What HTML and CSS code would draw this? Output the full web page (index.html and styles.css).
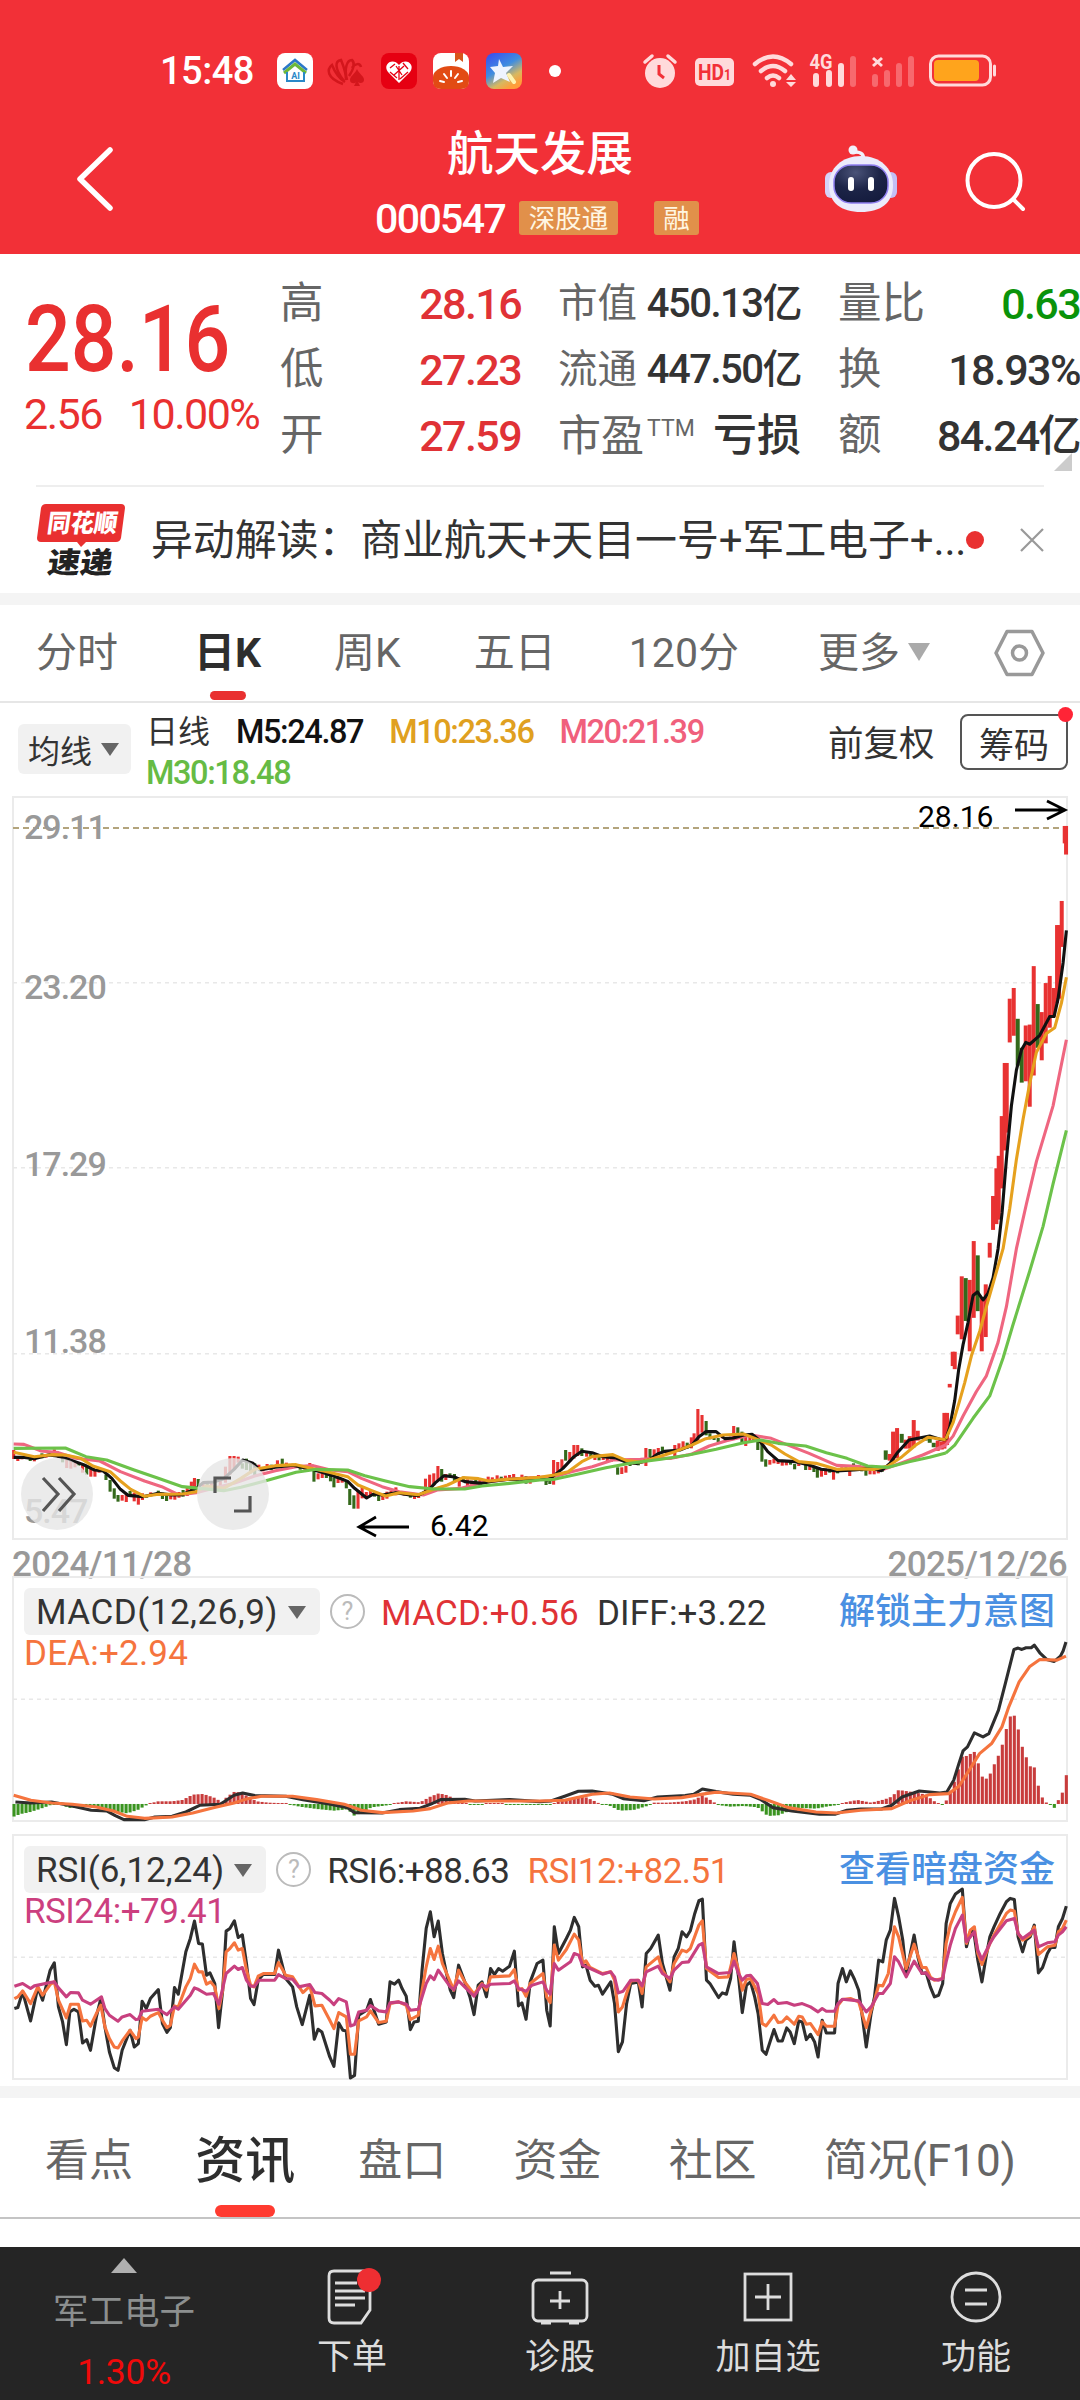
FILE: index.html
```html
<!DOCTYPE html>
<html lang="zh-CN">

<head>
    <meta charset="UTF-8">
    <meta name="viewport" content="width=device-width, initial-scale=1.0">
    <title>航天发展 000547</title>
    <link rel="stylesheet" href="styles.css">
</head>

<body>
    <header class="header">
        <div class="status-bar">
            <span class="clock">15:48</span>
            <svg class="app-icons" width="290" height="40" viewBox="275 51 290 40">
                <defs>
                    <linearGradient id="starBg" x1="0" y1="0" x2="0.6" y2="1">
                        <stop offset="0" stop-color="#3a48f0" />
                        <stop offset="0.5" stop-color="#3f8de0" />
                        <stop offset="0.8" stop-color="#d8b860" />
                        <stop offset="1" stop-color="#ff9d3a" />
                    </linearGradient>
                </defs>
                <rect x="277" y="53" width="36" height="36" rx="8" fill="#fff" />
                <path d="M283 70l12-10 12 10" fill="none" stroke="#2a78c8" stroke-width="2.5" />
                <path d="M284 73l11-9 11 9" fill="none" stroke="#6cb83a" stroke-width="3" />
                <path d="M287 72v9h17v-9" fill="none" stroke="#2a88c8" stroke-width="2" />
                <text x="295.500" y="79" font-size="9" font-weight="700" fill="#2a88c8" text-anchor="middle">AI</text>
                <g fill="none" stroke="#d3161c" stroke-width="2.500">
                    <path d="M343 84C326 78 327 69 332 65C334 70 338 78 345 82M344 81C334 68 335 61 341 60C343 65 346 72 346 80M347 80C344 68 347 60 352 60C356 64 353 70 349 76M352 68C355 63 360 63 361 67" />
                </g>
                <path d="M357 69c-2 5-7 7-7 11 0 4 5 4 6 2l-2 4h6l-2-4c2 2 6 1 6-2 0-4-5-6-7-11z" fill="#d3161c" />
                <rect x="381" y="53" width="36" height="36" rx="8" fill="#e60012" />
                <path d="M399 83l-11-11c-6-8 5-15 11-7 6-8 17-1 11 7z" fill="#fff" />
                <path d="M390 68l5-4M390 72l7 6M396 66l6 9M403 63l5 6M408 72l-8 7M399 66v14M394 75l10-9" stroke="#e60012" stroke-width="1.300" />
                <rect x="433" y="53" width="36" height="36" rx="8" fill="#fff" />
                <path d="M433 77a18 11 0 0 1 36 0v4q0 8-8 8h-20q-8 0-8-8z" fill="#e24b14" />
                <path d="M455 53h8v9l-4-3-4 3z" fill="#d8551c" />
                <path d="M451 71v5M444 74l3 4M458 74l-3 4M440 81l4 1M462 81l-4 1" stroke="#fff" stroke-width="2" stroke-linecap="round" />
                <rect x="486" y="53" width="36" height="36" rx="8" fill="url(#starBg)" />
                <path d="M499 59l4 8 10-1-7 7 4 9-9-4-8 5 2-10-5-6 8-1z" fill="#eef4ff" />
                <path d="M509 75l5 7" stroke="#fff3b0" stroke-width="4" stroke-linecap="round" />
                <circle cx="555" cy="71" r="6" fill="#fff" />
            </svg>
            <svg class="signal-icons" width="356" height="40" viewBox="642 51 356 40">
                <circle cx="660" cy="73" r="15" fill="#ffdadb" />
                <path d="M645 62l7-6M675 62l-7-6" stroke="#ffdadb" stroke-width="3.500" stroke-linecap="round" />
                <path d="M659 65v9l5 4" fill="none" stroke="#f23037" stroke-width="3" />
                <rect x="695" y="58" width="39" height="28" rx="5" fill="#ffdadb" />
                <text x="714.500" y="80" font-size="22" font-weight="700" fill="#f23037" text-anchor="middle" textLength="33" lengthAdjust="spacingAndGlyphs">HD<tspan font-size="14">1</tspan></text>
                <g fill="none" stroke="#ffdadb" stroke-width="4.500" stroke-linecap="round">
                    <path d="M755 64q18-15 36 0M761 71q12-10 24 0M767 78q6-5 12 0" />
                </g>
                <circle cx="773" cy="84" r="3" fill="#ffdadb" />
                <path d="M786 80l5-6 5 6zM786 82h10l-5 5z" fill="#ffdadb" />
                <text x="821" y="69" font-size="20" font-weight="700" fill="#ffdadb" text-anchor="middle" textLength="23" lengthAdjust="spacingAndGlyphs">4G</text>
                <path d="M816 76v8M829 73v11M841 66v18" stroke="#ffdadb" stroke-width="6" stroke-linecap="round" />
                <path d="M853 59v25" stroke="#f7696e" stroke-width="6" stroke-linecap="round" />
                <path d="M873 58l9 8M882 58l-9 8" stroke="#ffdadb" stroke-width="3" />
                <path d="M875 77v7M887 73v11M899 66v18M911 59v25" stroke="#f7696e" stroke-width="6" stroke-linecap="round" />
                <rect x="930.500" y="56" width="60" height="29" rx="8" fill="none" stroke="#ffdadb" stroke-width="3" />
                <rect x="934" y="60" width="45" height="21" rx="4" fill="#ffa41c" />
                <path d="M994.500 66v9" stroke="#ffdadb" stroke-width="3" stroke-linecap="round" />
            </svg>
        </div>
        <div class="title-bar">
            <svg class="back" width="44" height="70" viewBox="72 144 44 70">
                <path d="M110 150L80 179l30 29" fill="none" stroke="#fff" stroke-width="5.500" stroke-linecap="round" stroke-linejoin="round" />
            </svg>
            <div class="stock">
                <h1>航天发展</h1>
                <div class="stock-code">
                    <span class="code">000547</span>
                    <span class="tag">深股通</span>
                    <span class="tag tag-margin">融</span>
                </div>
            </div>
            <svg class="robot" width="76" height="72" viewBox="823 142 76 72">
                <defs>
                    <radialGradient id="face" cx="0.4" cy="0.2" r="0.9">
                        <stop offset="0" stop-color="#4a5378" />
                        <stop offset="0.5" stop-color="#1c2447" />
                        <stop offset="1" stop-color="#131a3c" />
                    </radialGradient>
                </defs>
                <path d="M863 160q2-8-8-8" fill="none" stroke="#f1f1fb" stroke-width="3.500" />
                <circle cx="853" cy="150" r="4.500" fill="#f1f1fb" />
                <rect x="825" y="172" width="12" height="26" rx="6" fill="#d5d2f8" />
                <rect x="885" y="172" width="12" height="26" rx="6" fill="#c3bff5" />
                <path d="M861 156C842 156 829 168 829 185C829 203 841 212 861 212C881 212 893 203 893 185C893 168 880 156 861 156z" fill="#ebebfb" />
                <rect x="834" y="165" width="54" height="38" rx="17" fill="url(#face)" stroke="#8f7ff0" stroke-width="1.500" />
                <path d="M851 180v8M871 180v8" stroke="#fff" stroke-width="6" stroke-linecap="round" />
            </svg>
            <svg class="search" width="66" height="66" viewBox="962 148 66 66">
                <circle cx="994" cy="180.500" r="26.500" fill="none" stroke="#fff" stroke-width="4" />
                <path d="M1014 200l9 9" stroke="#fff" stroke-width="4" stroke-linecap="round" />
            </svg>
        </div>
    </header>

    <section class="quote">
        <div class="price">
            <div class="last">28.16</div>
            <div class="change"><span>2.56</span><span>10.00%</span></div>
        </div>
        <dl class="stats">
            <div><dt>高</dt><dd class="up">28.16</dd></div>
            <div><dt>低</dt><dd class="up">27.23</dd></div>
            <div><dt>开</dt><dd class="up">27.59</dd></div>
        </dl>
        <dl class="stats stats-cap">
            <div><dt>市值</dt><dd>450.13亿</dd></div>
            <div><dt>流通</dt><dd>447.50亿</dd></div>
            <div><dt class="pe">市盈<sup>TTM</sup></dt><dd class="loss">亏损</dd></div>
        </dl>
        <dl class="stats">
            <div><dt>量比</dt><dd class="down">0.63</dd></div>
            <div><dt>换</dt><dd>18.93%</dd></div>
            <div><dt>额</dt><dd>84.24亿</dd></div>
        </dl>
        <i class="corner"></i>
    </section>

    <section class="news">
        <svg width="92" height="78" viewBox="35 500 92 78">
            <path d="M46 503h75q4 0 4 4l-4 30q-1 4-5 4H86l-5 5-4-5H41q-4 0-4-4l4-30q1-4 5-4z" fill="#e93030" />
            <g transform="skewX(-8)" font-weight="900">
                <text x="121" y="531" font-size="25" fill="#fff" textLength="70" lengthAdjust="spacingAndGlyphs">同花顺</text>
                <text x="127" y="572" font-size="29" fill="#222" textLength="65" lengthAdjust="spacingAndGlyphs">速递</text>
            </g>
        </svg>
        <p>异动解读：商业航天+天目一号+军工电子+...</p>
        <i class="dot"></i>
        <svg class="close" width="26" height="26" viewBox="0 0 26 26">
            <path d="M2 2l22 22M24 2L2 24" stroke="#999" stroke-width="2.200" />
        </svg>
    </section>

    <nav class="period-tabs">
        <a>分时</a>
        <a class="active">日K</a>
        <a>周K</a>
        <a>五日</a>
        <a>120分</a>
        <a class="more">更多<i class="caret"></i></a>
        <svg width="52" height="50" viewBox="994 628 52 50">
            <path d="M1007 631.500h25l11 21.500-11 21.500h-25l-11-21.500z" fill="none" stroke="#999" stroke-width="3.500" stroke-linejoin="round" />
            <circle cx="1019.500" cy="653" r="7" fill="none" stroke="#999" stroke-width="3.500" />
        </svg>
    </nav>

    <section class="ma-bar">
        <button class="select">均线<i class="caret"></i></button>
        <div class="ma-values">
            <span class="ma-title">日线</span>
            <span class="m5">M5:24.87</span>
            <span class="m10">M10:23.36</span>
            <span class="m20">M20:21.39</span>
            <span class="m30">M30:18.48</span>
        </div>
        <span class="adjust">前复权</span>
        <button class="chips">筹码</button>
    </section>

    <section class="frame kline">
        <svg id="kline" class="plot" viewBox="38 -1749 3061 2226" preserveAspectRatio="none"></svg>
        <svg class="notes" viewBox="0 0 1054 742">
            <text x="905" y="30" font-size="30">28.16</text>
            <path d="M1002 13h50M1034 4l18 9-18 9" />
            <text x="417" y="739" font-size="30">6.42</text>
            <path d="M396 730h-49M363 720l-17 10 17 9" />
        </svg>
        <span class="level level-1">29.11</span>
        <span class="level level-2">23.20</span>
        <span class="level level-3">17.29</span>
        <span class="level level-4">11.38</span>
        <span class="level level-5">5.47</span>
        <svg class="round expand" viewBox="0 0 72 72">
            <path d="M22 20l15 16-15 17M38 20l15 16-15 17" />
        </svg>
        <svg class="round full" viewBox="0 0 72 72">
            <path d="M18 35V20h16M53 38v15H37" />
        </svg>
    </section>
    <div class="dates"><span>2024/11/28</span><span>2025/12/26</span></div>

    <section class="frame indicator macd">
        <svg id="macd" class="plot" viewBox="38 -9 3061 731" preserveAspectRatio="none"></svg>
        <div class="legend">
            <button class="select">MACD(12,26,9)<i class="caret"></i></button>
            <span class="help">?</span>
            <span class="up">MACD:+0.56</span>
            <span>DIFF:+3.22</span>
            <a class="link">解锁主力意图</a>
        </div>
        <div class="legend-more orange">DEA:+2.94</div>
    </section>

    <section class="frame indicator">
        <svg id="rsi" class="plot" viewBox="38 15 3061 731" preserveAspectRatio="none"></svg>
        <div class="legend">
            <button class="select">RSI(6,12,24)<i class="caret"></i></button>
            <span class="help">?</span>
            <span>RSI6:+88.63</span>
            <span class="orange">RSI12:+82.51</span>
            <a class="link">查看暗盘资金</a>
        </div>
        <div class="legend-more purple">RSI24:+79.41</div>
    </section>

    <nav class="info-tabs">
        <a>看点</a>
        <a class="active">资讯</a>
        <a>盘口</a>
        <a>资金</a>
        <a>社区</a>
        <a>简况(F10)</a>
    </nav>

    <footer class="toolbar">
        <div class="sector">
            <i class="caret"></i>
            <span>军工电子</span>
            <b>1.30%</b>
        </div>
        <div class="tool">
            <svg viewBox="0 0 60 60">
                <path d="M12 5h31q5 0 5 5v34l-9 13H12q-5 0-5-5V10q0-5 5-5z" />
                <path d="M13 17h22M13 25h30M13 32h30M13 39h20" />
                <circle class="badge" cx="47" cy="14" r="12" />
            </svg>
            <span>下单</span>
        </div>
        <div class="tool">
            <svg viewBox="0 0 60 60">
                <rect x="3" y="14" width="54" height="41" rx="5" />
                <path d="M20 7h21M30 25v18M20 35h20M11 57h10M39 57h10" />
            </svg>
            <span>诊股</span>
        </div>
        <div class="tool">
            <svg viewBox="0 0 60 60">
                <rect x="7" y="8" width="46" height="46" />
                <path d="M30 18v26M17 31h26" />
            </svg>
            <span>加自选</span>
        </div>
        <div class="tool">
            <svg viewBox="0 0 60 60">
                <circle cx="30" cy="31" r="24" />
                <path d="M19 24h22M19 38h22" />
            </svg>
            <span>功能</span>
        </div>
    </footer>

    <script src="chart.js"></script>
</body>

</html>
```
FILE: styles.css
```css
* {
    box-sizing: border-box;
}

body {
    margin: 0;
    width: 1080px;
    height: 2400px;
    overflow: hidden;
    background: #fff;
    color: #333;
    font-family: Roboto, "Noto Sans CJK SC", sans-serif;
}

h1, p, dl, dd {
    margin: 0;
}

svg {
    display: block;
    flex: none;
}

button {
    font-family: inherit;
    border: none;
    padding: 0;
    white-space: nowrap;
}

.caret {
    display: inline-block;
    border: 9px solid transparent;
    border-top: 13px solid #666;
    border-bottom: none;
}

.up {
    color: #e03236 !important;
}

.down {
    color: #0a930a !important;
}

.orange {
    color: #f5743e;
}

.purple {
    color: #cc3f7f;
}

/* header */
.header {
    height: 254px;
    background: #f23037;
    color: #fff;
}

.status-bar {
    display: flex;
    align-items: center;
    height: 142px;
    padding-left: 160px;
}

.clock {
    width: 115px;
    font-size: 38px;
    font-weight: 500;
    letter-spacing: -0.5px;
}

.signal-icons {
    margin-left: 77px;
}

.title-bar {
    display: flex;
    height: 112px;
    margin-top: -18px;
    padding-left: 72px;
}

.back {
    margin-top: 20px;
}

.stock {
    width: 590px;
    margin: 0 28px 0 89px;
    text-align: center;
}

.stock h1 {
    width: 490px;
    padding-left: 179px;
    text-align: left;
    font-size: 46.5px;
    font-weight: 500;
    line-height: 60px;
    margin-left: 63px;
}

.stock-code {
    display: flex;
    align-items: center;
    height: 34px;
    margin-top: 17px;
    padding-left: 170px;
}

.code {
    width: 144px;
    text-align: left;
    font-size: 41px;
    font-weight: 500;
    line-height: 34px;
    padding-top: 2px;
    letter-spacing: -1.6px;
}

.tag {
    width: 99px;
    height: 34px;
    border-radius: 3px;
    background: #e1904a;
    color: #fff6e2;
    font-size: 26.5px;
    line-height: 35px;
}

.tag-margin {
    width: 45px;
    margin-left: 36px;
}

.robot {
    margin-top: 18px;
}

.search {
    margin: 24px 0 0 63px;
}

/* quote */
.quote {
    position: relative;
    display: grid;
    grid-template-columns: 280px 241px 280px 279px;
    height: 231px;
    padding-top: 16px;
}

.price {
    padding-left: 24px;
    color: #e93030;
}

.last {
    width: 240px;
    margin-top: 20px;
    padding-left: 1px;
    font-size: 92px;
    font-weight: 500;
    line-height: 100px;
    transform: scaleX(0.875);
    transform-origin: left;
}

.change {
    display: flex;
    gap: 27px;
    margin-top: -1px;
    font-size: 43px;
    line-height: 50px;
    letter-spacing: -1.5px;
    white-space: nowrap;
}

.stats + .stats {
    padding-left: 37px;
}

.stats div {
    display: flex;
    justify-content: space-between;
    height: 66px;
    line-height: 68px;
    white-space: nowrap;
}

.stats dt {
    color: #666;
    font-size: 43.5px;
}

.stats dd {
    font-size: 43px;
    font-weight: 500;
    letter-spacing: -1.6px;
    color: #333;
}

.stats-cap dt {
    font-size: 39.5px;
}

.stats-cap dd {
    font-size: 40px;
    letter-spacing: -1.5px;
}

.stats-cap .pe {
    font-size: 43px;
}

.stats-cap .loss {
    font-size: 44px;
    letter-spacing: 0;
}

.pe sup {
    font-size: 23px;
    line-height: 0;
    margin-left: 3px;
    vertical-align: 15px;
}

.corner {
    position: absolute;
    right: 8px;
    bottom: 14px;
    border-left: 18px solid transparent;
    border-bottom: 18px solid #ccc;
}

/* news */
.news {
    display: flex;
    align-items: center;
    height: 108px;
    margin: 0 36px;
    border-top: 2px solid #eee;
}

.news svg:first-child {
    margin-left: -1px;
}

.news p {
    width: 840px;
    padding: 2px 0 0 24px;
    font-size: 42px;
    letter-spacing: -0.15px;
    white-space: nowrap;
    line-height: 60px;
}

.dot {
    flex: none;
    width: 18px;
    height: 18px;
    border-radius: 50%;
    background: #e93030;
}

.close {
    margin-left: 35px;
}

/* period tabs */
.period-tabs {
    display: flex;
    align-items: center;
    height: 110px;
    padding: 0 34px 0 36px;
    justify-content: space-between;
    border-top: 12px solid #f4f4f4;
    border-bottom: 2px solid #e6e6e6;
    font-size: 41px;
    line-height: 100px;
    color: #666;
}

.active {
    position: relative;
    color: #2e2e2e;
    font-weight: 700;
}

.period-tabs .active {
    margin-left: 3px;
}

.period-tabs svg {
    margin-left: -9px;
}

.active::after {
    content: "";
    position: absolute;
    left: 50%;
    bottom: 0;
    width: 36px;
    height: 9px;
    margin-left: -18px;
    border-radius: 5px;
    background: #e93030;
}

.period-tabs .active::after {
    bottom: 3px;
}

.more {
    margin-left: 6px;
}

.more .caret {
    margin: 0 0 6px 8px;
    border-width: 18px 11px 0;
    border-top-color: #aaa;
}

/* moving averages */
.ma-bar {
    display: flex;
    height: 93px;
    padding-left: 18px;
}

.select {
    display: flex;
    align-items: center;
    background: #f1f1f1;
    border-radius: 6px;
    color: #333;
}

.ma-bar .select {
    width: 113px;
    height: 50px;
    margin-top: 21px;
    padding-left: 10px;
    gap: 9px;
    font-size: 32px;
}

.ma-values {
    display: flex;
    flex-wrap: wrap;
    align-content: flex-start;
    column-gap: 26px;
    width: 697px;
    padding: 9px 120px 0 15px;
    font-size: 32.5px;
    font-weight: 500;
    line-height: 41px;
    letter-spacing: -1.4px;
}

.ma-title {
    font-size: 32px;
    font-weight: 400;
    letter-spacing: 0;
}

.m5 { color: #111; }
.m10 { color: #e0a020; }
.m20 { color: #f0607c; }
.m30 { color: #66bb44; }

.adjust {
    width: 132px;
    font-size: 35.5px;
    line-height: 83px;
}

.chips {
    position: relative;
    width: 108px;
    height: 56px;
    margin-top: 11px;
    border: 2px solid #555;
    border-radius: 8px;
    background: #fff;
    color: #333;
    font-size: 35px;
}

.chips::after {
    content: "";
    position: absolute;
    top: -9px;
    right: -7px;
    width: 15px;
    height: 15px;
    border-radius: 50%;
    background: #ff2436;
}

/* charts */
.frame {
    position: relative;
    margin: 0 12px;
    border: 2px solid #ebebeb;
}

.plot,
.notes {
    position: absolute;
    left: -1px;
    top: -1px;
    width: 1054px;
    height: 742px;
    overflow: visible;
}

.indicator .plot {
    height: 244px;
}

.plot path {
    fill: none;
    stroke-width: 3.1px;
    stroke-linejoin: round;
    vector-effect: non-scaling-stroke;
}

.plot .grid {
    stroke: #e8e8e8;
    stroke-width: 1.5px;
    stroke-dasharray: 4 4;
}

.plot .limit {
    stroke: #b3a47c;
    stroke-width: 2px;
    stroke-dasharray: 6 4;
}

.kline {
    height: 744px;
}

.notes path {
    fill: none;
    stroke: #000;
    stroke-width: 2.8px;
}

.notes text {
    fill: #000;
}

.level {
    position: absolute;
    left: 10px;
    font-size: 34px;
    font-weight: 500;
    line-height: 40px;
    letter-spacing: -1px;
    color: #999;
}

.level-1 { top: 9px; }
.level-2 { top: 169px; }
.level-3 { top: 346px; }
.level-4 { top: 523px; }
.level-5 { top: 693px; }

.round {
    position: absolute;
    top: 660px;
    width: 72px;
    height: 72px;
    border-radius: 50%;
    background: rgba(230, 230, 230, 0.8);
    fill: none;
    stroke: #555;
    stroke-width: 3.2px;
}

.expand { left: 7px; }
.full { left: 183px; }

.dates {
    display: flex;
    justify-content: space-between;
    height: 36px;
    padding: 0 13px 0 12px;
    font-size: 35px;
    font-weight: 500;
    line-height: 50px;
    letter-spacing: -0.7px;
    color: #999;
}

.indicator {
    height: 246px;
    margin-bottom: 12px;
    font-size: 35px;
    letter-spacing: -0.5px;
}

.macd {
    letter-spacing: 0.2px;
}

.legend {
    position: relative;
    display: flex;
    align-items: center;
    margin: 10px 11px 0 10px;
    height: 47px;
    line-height: 47px;
}

.legend .select {
    height: 47px;
    padding: 2px 14px 0 12px;
    gap: 10px;
    font-size: 35px;
}

.macd .select {
    letter-spacing: 0.5px;
}

.legend span {
    padding-top: 3px;
}

.legend .help {
    width: 35px;
    height: 35px;
    margin: 0 -2px 0 10px;
    padding: 0;
    border: 2.5px solid #bbb;
    border-radius: 50%;
    color: #bbb;
    font-size: 25px;
    line-height: 31px;
    text-align: center;
}

.legend span + span {
    margin-left: 18px;
}

.link {
    margin: 1px 0 0 auto;
    font-size: 36px;
    font-weight: 500;
    line-height: 48px;
    letter-spacing: 0;
    color: #4a90e2;
}

.legend-more {
    position: relative;
    padding-left: 10px;
    line-height: 38px;
}

/* info tabs */
.info-tabs {
    display: flex;
    justify-content: space-between;
    height: 133px;
    margin-top: -6px;
    padding: 0 64px 0 45px;
    border-top: 12px solid #f4f4f4;
    border-bottom: 2px solid #c4c4c4;
    font-size: 44px;
    line-height: 127px;
    color: #666;
}

.info-tabs .active {
    height: 119px;
    margin: 0 -4px 0 -5px;
    font-size: 50px;
    font-weight: 500;
}

.info-tabs .active::after {
    width: 60px;
    height: 12px;
    margin-left: -30px;
    border-radius: 6px;
    background: #ff3b30;
}

/* bottom toolbar */
.toolbar {
    display: grid;
    grid-template-columns: 248px 208px 208px 208px 208px;
    height: 153px;
    margin-top: 28px;
    background: #252525;
    color: #ddd;
    font-size: 35px;
    text-align: center;
}

.sector {
    padding-top: 11px;
    color: #8c8f8f;
    font-size: 35.5px;
}

.sector .caret {
    display: block;
    width: 0;
    margin: 0 auto;
    border: 13px solid transparent;
    border-top: none;
    border-bottom: 15px solid #b0b0b0;
}

.sector span {
    display: block;
    line-height: 78px;
}

.sector b {
    display: block;
    color: #f00a0a;
    font-weight: 400;
    line-height: 42px;
    letter-spacing: -0.3px;
}

.tool {
    padding-top: 19px;
}

.tool svg {
    width: 60px;
    height: 60px;
    margin: 0 auto;
    fill: none;
    stroke: #ddd;
    stroke-width: 2.8px;
}

.tool .badge {
    fill: #ee2e32;
    stroke: none;
}

.tool span {
    display: block;
    line-height: 63px;
}
```
FILE: chart.js
```js
const NS = 'http://www.w3.org/2000/svg';

function add(parent, tag, attrs) {
    const el = document.createElementNS(NS, tag);
    for (const key in attrs) {
        el.setAttribute(key, attrs[key]);
    }
    parent.appendChild(el);
    return el;
}

function line(parent, points, color) {
    add(parent, 'path', { d: 'M' + points, stroke: color });
}

function grid(parent, y, cls) {
    add(parent, 'path', { d: `M38 ${y}H3099`, class: cls || 'grid' });
}

// "x,top,bottom" triples; a trailing g marks a falling day
function candles(parent, data, width) {
    data.split(' ').forEach(item => {
        const [x, top, bottom] = item.split(',').map(parseFloat);
        add(parent, 'rect', {
            x: x - width / 2,
            y: top,
            width: width,
            height: bottom - top,
            fill: item.endsWith('g') ? '#34691b' : '#e83232'
        });
    });
}

// K line
const kline = document.getElementById('kline');
[-1192, -637, -79].forEach(y => grid(kline, y));
grid(kline, -1656, 'grid limit');

candles(kline, '40,210,237 52,230,243 64,229,238 76,230,237g 88,229,243g 100,232,244 112,228,236 122,220,235g 134,226,233 146,218,227g 158,208,226 170,218,232 182,232,247g 194,238,264 206,240,266 218,245,262 228,246,257g 240,256,278 252,260,284g 264,266,290 276,270,290 288,270,278 308,284,300g 320,300,335g 332,325,356g 343,345,365g 355,345,362 367,342,366 378,333,350g 390,338,364 402,345,374 414,340,360 426,345,353g 438,337,346 460,332,342g 472,338,357g 484,342,363g 496,345,358 508,345,359 520,336,353 532,330,350g 544,322,348 556,305,330 565,294,330 576,297,318g 590,306,320 602,310,322g 614,304,318 640,300,318 655,260,308 668,228,284 680,228,268 692,230,248 704,250,266g 716,236,270g 728,252,280g 740,250,290g 752,254,268 764,262,274 776,252,262 788,254,270g 806,241,264 820,236,258g 832,248,260 850,254,262 872,256,269g 886,255,269 900,249,266 912,272,305g 924,280,298 936,278,294 948,284,294g 960,285,304g 970,294,322g 982,290,309 994,294,308 1006,300,325g 1016,327,375g 1028,346,386g 1040,330,386 1052,320,355 1064,336,357 1076,332,348 1088,335,350g 1100,342,363g 1112,342,360 1124,335,356 1136,332,344 1150,322,346 1162,334,342g 1174,336,347 1192,342,353g 1204,343,357 1216,342,354 1236,296,345 1248,284,330 1260,280,316 1272,258,300 1283,267,305g 1295,282,300 1307,280,292g 1320,282,305g 1334,292,320 1346,290,305g 1358,298,320 1370,302,314 1382,295,306g 1394,300,312 1406,300,311 1418,290,302 1430,292,303 1444,286,305 1456,290,299g 1468,287,302 1480,285,300 1492,282,296 1504,291,301g 1516,284,308 1528,288,311g 1540,290,311 1552,289,305 1564,285,300 1576,292,303 1586,290,315g 1597,290,312g 1608,240,314 1620,246,285 1632,238,265 1643,210,242g 1655,216,245 1667,195,236 1678,195,228 1690,205,228g 1704,216,230 1716,220,232g 1728,228,240 1740,225,241g 1752,230,240 1764,230,243 1776,232,245 1794,262,284g 1806,262,282 1818,258,278 1830,245,258g 1842,240,254 1854,238,256g 1866,234,250 1876,204,258 1888,207,236g 1900,208,228 1912,204,222 1924,200,220g 1936,213,221 1948,210,220 1960,195,236 1972,190,213 1984,184,210 1996,188,206g 2008,172,205 2016,160,192 2027,87,182 2039,105,158 2051,123,166g 2062,160,178g 2074,168,180g 2086,174,186g 2098,165,175 2110,174,182g 2122,170,180 2131,138,172 2143,142,160g 2155,155,188g 2166,165,198 2178,168,185 2189,162,180 2201,175,210g 2213,190,245g 2224,238,260g 2236,240,254 2248,236,250 2260,238,252 2272,244,257 2284,246,256 2296,244,254g 2308,252,268g 2320,248,258 2340,252,270g 2352,256,270 2364,260,276g 2374,264,293g 2386,268,290 2398,266,285 2410,266,278g 2421,268,299 2433,270,280g 2445,262,274 2457,262,274g 2468,266,288 2479,250,266g 2491,256,268 2503,262,274g 2515,266,287g 2527,268,283 2539,268,283 2551,266,280 2563,260,275g', 9);

const surge = add(kline, 'g', { transform: 'translate(2439 -1800) scale(0.968 1.339)' });
candles(surge, '138,1502,1523g 150,1510,1525 160,1460,1530 172,1452,1520 186,1465,1485g 198,1478,1498 210,1470,1498 222,1434,1495 234,1458,1480 258,1470,1480g 270,1475,1485g 282,1485,1495g 294,1480,1503 306,1482,1500 314,1418,1498 322,1418,1490 330,1353,1361 339,1281,1313 345,1281,1320 354,1200,1242 366,1112,1253 378,1116,1212g 390,1120,1280 402,1033,1205 414,1065,1190g 426,1160,1280 438,1130,1248 450,1037,1070 460,932,1008 470,870,995 477,842,985 486,753,915 495,634,830 501,634,790 510,490,588 522,466,573 534,535,640g 546,600,678g 558,550,675 570,548,732 582,417,662 594,502,600g 606,520,628 618,455,590 630,439,555 642,466,530 652,325,500 658,325,490 666,271,374 675,103,142 679,103,167', 12);

line(kline, '40,192 70,193 120,213 170,218 220,235 290,243 350,275 420,303 470,320 520,345 570,338 620,325 680,310 740,288 800,272 860,260 910,257 960,270 1010,275 1050,295 1110,320 1160,335 1230,345 1270,330 1340,325 1400,308 1480,297 1568,292 1610,290 1660,275 1720,260 1780,240 1860,238 1910,235 1950,235 2010,222 2060,198 2110,182 2180,165 2240,175 2300,200 2350,220 2430,256 2500,260 2560,270 2620,248 2680,225 2747,195', '#ef6680');
line(kline, '40,232 65,232 100,236 140,225 165,228 200,238 245,255 275,270 300,273 325,295 350,328 372,346 415,350 460,340 500,345 530,344 560,330 575,322 590,308 620,306 650,296 680,268 705,240 735,250 755,270 800,262 850,256 905,268 940,278 985,294 1010,304 1030,325 1065,354 1085,342 1110,345 1150,338 1190,345 1215,346 1245,330 1265,308 1290,287 1320,291 1350,305 1400,310 1430,304 1480,298 1568,296 1590,300 1605,290 1635,265 1665,232 1690,214 1720,218 1750,230 1790,234 1820,247 1850,250 1885,240 1910,222 1930,214 1975,210 2010,195 2030,170 2050,155 2080,155 2105,176 2130,174 2160,165 2185,163 2205,180 2230,215 2260,242 2310,245 2350,255 2385,268 2430,273 2480,270 2530,265 2560,272 2585,250 2605,220 2640,180 2700,168 2730,178 2747,179', '#111');
line(kline, '40,217 100,230 150,224 190,225 235,235 270,258 320,275 350,303 380,328 420,349 460,343 530,342 570,335 600,318 650,325 700,295 740,268 800,257 860,254 900,264 950,275 1010,290 1040,315 1080,332 1120,348 1160,338 1215,344 1260,328 1300,315 1345,293 1390,296 1420,303 1470,298 1568,292 1610,285 1650,275 1690,245 1720,230 1780,224 1820,242 1860,246 1900,235 1960,215 2010,195 2050,176 2100,165 2160,162 2200,178 2240,195 2280,222 2320,245 2370,250 2430,268 2480,266 2540,268 2580,258 2620,230 2660,195 2695,172 2747,179', '#e6a11e');
line(kline, '40,205 190,204 250,230 310,240 390,270 460,295 530,320 580,325 650,332 700,322 780,300 860,277 920,268 1010,270 1060,287 1120,303 1190,320 1260,327 1350,327 1400,318 1480,310 1568,300 1610,298 1680,282 1760,263 1830,250 1920,238 2000,225 2080,208 2160,188 2210,180 2260,190 2340,198 2400,218 2460,235 2520,258 2580,262 2640,245 2700,232 2747,219', '#6cc24a');

line(surge, '318,1478 330,1450 345,1390 357,1320 370,1265 385,1215 400,1155 413,1147 430,1165 445,1150 460,1115 475,1050 487,970 500,850 515,730 530,650 545,605 558,588 570,592 600,572 630,530 643,530 655,490 670,410 680,337', '#111');
line(surge, '318,1477 340,1440 360,1390 375,1350 395,1290 420,1235 440,1180 465,1115 490,1050 510,960 530,850 550,760 570,680 590,610 620,568 645,555 665,500 680,442', '#e6a11e');
line(surge, '318,1490 340,1470 370,1425 410,1370 440,1335 475,1260 500,1180 530,1050 560,950 590,855 640,730 680,582', '#ef6680');
line(surge, '318,1508 345,1490 400,1430 450,1380 490,1295 520,1220 570,1100 610,1000 640,905 680,785', '#6cc24a');

// MACD
const macd = document.getElementById('macd');
const ZERO = 671;
const DAY = 11.62;
const histogram = [[40, -38], [60, -30], [85, -25], [110, -17], [135, -8], [150, -2], [180, -3], [200, -12], [240, -10], [270, -8], [300, -12], [330, -22], [370, -28], [400, -18], [425, -4], [440, 3], [460, 8], [500, 8], [530, 12], [560, 28], [590, 30], [620, 20], [645, 6], [660, 22], [680, 36], [700, 35], [720, 22], [745, 8], [780, 4], [830, 2], [845, -2], [870, -8], [920, -15], [970, -20], [1010, -16], [1030, -36], [1050, -25], [1080, -10], [1140, -2], [1150, 3], [1180, 8], [1220, 5], [1250, 22], [1275, 32], [1300, 26], [1330, 10], [1370, -2], [1440, 2], [1500, -2], [1600, -3], [1610, 3], [1650, 15], [1690, 25], [1720, 12], [1740, 2], [1770, -5], [1800, -20], [1840, -18], [1880, -6], [1900, 4], [1940, 4], [1990, 8], [2020, 14], [2040, 26], [2070, 8], [2085, -3], [2120, -8], [2160, -6], [2200, -10], [2230, -36], [2260, -34], [2290, -22], [2330, -12], [2370, -14], [2400, -8], [2440, -2], [2450, 4], [2490, 12], [2530, 4], [2570, 14], [2590, 22], [2610, 42], [2650, 36], [2690, 28], [2710, 10], [2735, -2], [2750, 12], [2773, 70], [2795, 142], [2805, 143], [2830, 156], [2842, 120], [2853, 82], [2863, 74], [2875, 88], [2887, 117], [2899, 143], [2911, 177], [2922, 222], [2934, 262], [2945, 268], [2957, 226], [2969, 172], [2980, 142], [2992, 113], [3004, 110], [3015, 57], [3027, 20], [3038, 5], [3050, -2], [3061, -14], [3073, 10], [3085, 32], [3097, 86]];

grid(macd, 357);
let k = 0;
for (let i = 0; i < 264; i++) {
    const x = 41 + i * DAY;
    while (k < histogram.length - 2 && histogram[k + 1][0] < x) {
        k++;
    }
    const [x0, v0] = histogram[k];
    const [x1, v1] = histogram[k + 1];
    const v = v0 + (v1 - v0) * (x - x0) / (x1 - x0);
    const height = Math.max(Math.abs(v), 3);
    add(macd, 'rect', {
        x: x - 4.5,
        y: v > 0 ? ZERO - height : ZERO,
        width: 9,
        height: height,
        fill: v > 0 ? '#c83c3c' : '#3a9420'
    });
}
line(macd, '45,665 90,668 150,665 200,675 265,690 310,692 335,706 360,718 420,718 450,710 500,708 540,695 580,675 640,672 680,645 705,638 740,646 830,648 880,658 960,672 1010,682 1030,697 1110,698 1160,688 1220,684 1250,672 1280,658 1350,657 1380,662 1480,658 1568,664 1600,662 1640,648 1680,633 1720,632 1780,642 1810,655 1870,661 1910,650 1990,646 2015,642 2040,626 2080,634 2130,642 2180,645 2210,658 2245,682 2300,692 2380,702 2425,702 2460,690 2500,686 2560,686 2590,675 2620,650 2670,632 2730,638 2750,635 2770,600 2785,550 2797,512 2810,500 2830,458 2855,470 2872,460 2900,390 2920,310 2945,208 2957,204 2968,208 2980,203 2995,203 3004,195 3020,218 3040,238 3062,244 3080,228 3088,212 3096,186', '#2e2e2e');
line(macd, '40,645 90,660 150,668 210,672 280,680 330,692 370,708 420,714 500,710 560,698 620,682 680,668 720,655 760,648 850,648 920,658 1000,672 1050,690 1110,697 1200,692 1250,685 1300,668 1360,662 1470,662 1568,662 1640,660 1720,642 1770,638 1830,650 1900,656 1980,652 2050,640 2080,636 2180,642 2230,660 2290,682 2370,695 2430,698 2500,690 2590,685 2640,662 2700,643 2755,640 2785,618 2810,578 2845,520 2880,490 2910,440 2930,380 2960,305 2990,260 3020,238 3070,240 3096,228', '#f5743e');

// RSI
const rsi = document.getElementById('rsi');
grid(rsi, 381);
line(rsi, '42,535 52,532 66,485 89,572 110,472 124,510 146,420 158,398 170,530 182,575 193,643 203,545 215,537 228,545 240,638 252,628 263,660 280,560 293,505 305,590 318,665 332,712 343,720 355,660 378,600 390,650 402,640 413,513 425,535 437,505 460,478 472,580 485,606 495,592 507,472 518,492 540,365 553,325 565,273 577,340 588,342 600,435 610,428 624,460 635,592 647,480 657,303 668,295 681,272 692,322 704,314 716,400 728,505 738,523 750,450 765,432 798,433 809,360 830,445 850,470 862,530 878,583 900,495 913,627 924,597 935,605 958,680 970,708 984,578 996,600 1006,602 1018,743 1030,735 1042,555 1065,540 1076,508 1088,545 1100,582 1122,575 1133,455 1146,462 1158,450 1168,475 1180,498 1192,598 1203,575 1215,573 1226,420 1238,295 1250,245 1261,320 1273,273 1285,370 1297,430 1308,480 1318,502 1332,405 1350,455 1365,500 1377,553 1389,465 1400,455 1413,500 1425,415 1436,433 1448,415 1460,423 1480,408 1494,363 1506,527 1516,518 1528,567 1540,455 1560,400 1577,390 1588,540 1598,587 1610,290 1622,370 1645,325 1657,300 1668,262 1681,290 1692,410 1702,405 1714,450 1728,468 1738,465 1750,492 1774,455 1785,520 1796,664 1808,635 1820,520 1832,460 1854,455 1865,530 1877,370 1890,355 1912,315 1924,400 1946,480 1958,380 1970,355 1981,305 1994,320 2005,302 2018,250 2030,212 2040,207 2052,450 2062,460 2074,480 2087,502 2098,488 2110,492 2122,445 2132,335 2145,440 2156,547 2168,465 2180,455 2192,500 2202,550 2214,660 2225,672 2248,598 2260,632 2272,632 2285,593 2295,605 2307,640 2320,572 2330,575 2342,628 2354,612 2366,635 2376,680 2388,570 2400,608 2424,608 2434,460 2447,415 2458,455 2470,422 2482,448 2494,480 2506,570 2516,650 2530,550 2540,500 2552,390 2564,395 2574,330 2586,300 2598,205 2610,260 2622,330 2632,430 2655,315 2666,380 2678,430 2690,428 2702,470 2714,500 2726,495 2738,460 2748,280 2760,220 2775,192 2795,177 2807,350 2818,305 2828,302 2840,390 2852,455 2864,380 2875,320 2887,290 2905,250 2923,215 2934,205 2946,208 2957,320 2970,365 2980,330 2992,320 3004,285 3016,428 3028,412 3042,370 3052,352 3064,352 3074,290 3086,265 3097,228', '#2e2e2e');
line(rsi, '42,505 52,500 66,482 89,520 110,470 124,495 146,463 158,455 170,510 193,563 205,522 228,522 240,572 252,570 263,588 280,550 293,525 305,590 318,625 332,650 343,653 355,632 378,600 395,625 402,620 413,562 425,570 437,558 460,547 472,570 485,592 495,585 507,527 518,530 540,470 553,445 565,402 577,425 588,425 600,462 612,455 624,470 636,535 647,480 657,365 668,355 681,338 692,360 704,355 716,420 728,465 738,470 750,438 765,430 798,430 809,397 830,435 850,440 880,487 900,468 915,527 935,525 958,570 970,595 984,547 1006,560 1018,672 1030,672 1042,572 1065,560 1076,542 1100,577 1122,573 1133,520 1158,515 1180,525 1192,568 1215,555 1226,480 1238,410 1250,355 1261,388 1273,348 1285,400 1308,455 1318,480 1332,420 1350,455 1377,492 1400,460 1413,480 1425,440 1480,437 1494,418 1506,480 1516,475 1528,498 1540,460 1577,430 1588,500 1598,517 1610,345 1622,390 1645,358 1668,312 1681,330 1692,400 1702,392 1714,412 1750,430 1774,425 1785,450 1796,545 1808,530 1820,490 1832,452 1854,450 1865,490 1877,410 1912,380 1924,420 1946,455 1958,400 1981,360 1994,365 2005,355 2030,285 2040,272 2052,415 2087,442 2115,440 2132,370 2145,420 2156,480 2168,448 2180,445 2202,490 2214,580 2225,587 2248,555 2260,577 2272,575 2285,560 2307,582 2320,558 2330,560 2342,582 2354,580 2376,613 2388,575 2400,588 2424,588 2434,525 2447,508 2470,505 2494,515 2516,592 2530,540 2540,510 2552,465 2564,467 2580,430 2598,290 2610,320 2632,415 2655,342 2678,412 2690,412 2702,440 2714,450 2738,445 2748,340 2760,285 2775,245 2795,202 2807,340 2818,300 2830,290 2840,370 2852,403 2875,340 2887,315 2923,250 2934,240 2946,243 2957,310 2970,330 2992,315 3004,290 3016,373 3042,350 3064,345 3074,305 3086,295 3097,270', '#f5743e');
line(rsi, '42,468 66,460 89,475 100,467 146,457 158,455 170,473 193,500 205,487 228,488 240,510 263,522 295,500 305,535 318,555 343,573 355,560 378,553 395,568 402,567 413,543 460,537 485,553 507,530 518,537 553,495 565,473 577,478 600,492 620,490 636,522 657,430 681,408 692,418 704,412 716,450 728,468 740,468 752,450 798,450 809,433 830,445 850,447 868,470 900,463 915,487 935,490 958,510 970,523 984,505 1006,515 1018,587 1030,583 1042,545 1065,540 1076,526 1100,542 1122,545 1133,518 1158,515 1180,522 1192,540 1215,537 1238,460 1250,437 1261,448 1273,420 1308,470 1318,478 1332,452 1377,498 1400,463 1413,470 1425,462 1480,460 1494,452 1506,475 1528,483 1545,465 1577,455 1588,480 1598,492 1610,400 1622,420 1657,395 1668,370 1681,375 1692,405 1750,432 1774,425 1785,440 1796,488 1810,483 1832,450 1854,450 1865,467 1877,425 1912,408 1924,430 1946,445 1958,420 1981,397 2000,395 2030,345 2040,340 2052,410 2087,430 2120,427 2132,393 2145,430 2156,450 2168,437 2180,435 2200,460 2214,520 2230,523 2248,508 2260,520 2285,517 2307,525 2330,520 2354,530 2376,545 2388,535 2400,543 2424,543 2434,520 2447,507 2494,512 2516,545 2530,530 2552,490 2564,490 2586,460 2598,380 2610,395 2632,440 2655,393 2678,430 2690,428 2702,445 2725,450 2738,445 2748,395 2760,345 2775,295 2795,255 2807,335 2830,305 2840,360 2852,388 2875,340 2887,320 2923,272 2946,265 2957,310 2970,325 3004,300 3016,350 3042,338 3064,335 3074,315 3086,305 3097,290', '#c8407f');
```
